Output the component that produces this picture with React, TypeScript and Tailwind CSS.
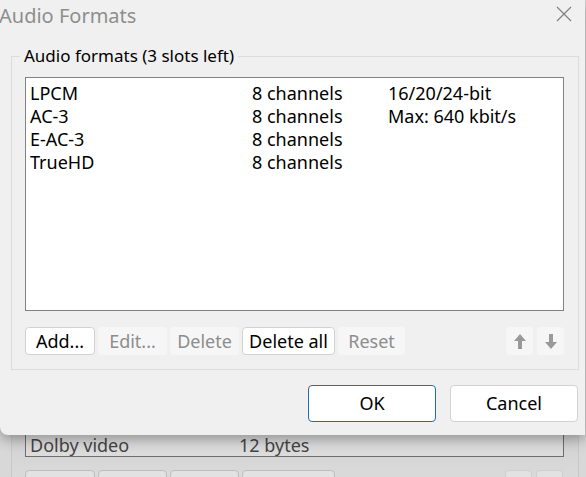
import { ReactNode } from "react";

const font = { fontFamily: '"Noto Sans", "Open Sans", sans-serif' };

interface Fmt {
  name: string;
  channels: string;
  note?: string;
}

const FORMATS: Fmt[] = [
  { name: "LPCM", channels: "8 channels", note: "16/20/24-bit" },
  { name: "AC-3", channels: "8 channels", note: "Max: 640 kbit/s" },
  { name: "E-AC-3", channels: "8 channels" },
  { name: "TrueHD", channels: "8 channels" },
];

function Btn({ children, disabled, w }: { children: ReactNode; disabled?: boolean; w: string }) {
  return (
    <button
      className={`${w} flex h-[28px] items-center justify-center rounded-[4px] text-[18px] ${
        disabled
          ? "bg-[#f6f6f6] text-[#8d8d8d]"
          : "border border-[#d2d2d2] bg-white text-black"
      }`}
    >
      {children}
    </button>
  );
}

function ArrowIcon({ down }: { down?: boolean }) {
  return (
    <svg width="12" height="15" viewBox="0 0 12 15" className={down ? "rotate-180" : ""}>
      <path d="M6 0 L12 7 L8 7 L8 15 L4 15 L4 7 L0 7 Z" fill="#9a9a9a" />
    </svg>
  );
}

export default function App() {
  return (
    <div className="flex h-[477px] w-[586px] flex-col overflow-hidden bg-[#d8d8d8]" style={font}>
      {/* dialog */}
      <div className="relative z-10 flex h-[435px] w-[585px] shrink-0 flex-col rounded-bl-[8px] bg-[#f0f0f0] shadow-[0_4px_14px_rgba(0,0,0,0.35)]">
        {/* title bar */}
        <div className="flex h-[40px] items-start justify-between">
          <span className="ml-[-1px] mt-[1px] text-[20px] leading-[30px] text-[#8e8e8e]">Audio Formats</span>
          <svg width="16" height="16" viewBox="0 0 16 16" className="mr-[13px] mt-[6px]">
            <path d="M1 1 L15 15 M15 1 L1 15" stroke="#808080" strokeWidth="1.2" />
          </svg>
        </div>

        <fieldset className="ml-[11px] mt-[4px] w-[568px] border border-[#dcdcdc] pb-[14px] pl-[13px] pr-[14px]">
          <legend className="ml-[-5px] px-[4px] text-[17px] leading-[24px] text-black">
            Audio formats (3 slots left)
          </legend>
          <div className="mt-[9px] h-[234px] w-[539px] border border-[#828282] bg-white pl-[4px] pt-[4px]">
            {FORMATS.map((f) => (
              <div key={f.name} className="flex h-[23px] items-center text-[18px] text-black">
                <span className="w-[222px]">{f.name}</span>
                <span className="w-[136px]">{f.channels}</span>
                <span>{f.note}</span>
              </div>
            ))}
          </div>
          <div className="mt-[16px] flex items-center">
            <div className="flex gap-[3px]">
              <Btn w="w-[70px]">Add...</Btn>
              <Btn w="w-[69px]" disabled>Edit...</Btn>
              <Btn w="w-[69px]" disabled>Delete</Btn>
              <Btn w="w-[93px]">Delete all</Btn>
              <Btn w="w-[67px]" disabled>Reset</Btn>
            </div>
            <div className="ml-auto flex gap-[4px]">
              <button className="flex h-[28px] w-[27px] items-center justify-center rounded-[4px] bg-[#f6f6f6]">
                <ArrowIcon />
              </button>
              <button className="flex h-[28px] w-[27px] items-center justify-center rounded-[4px] bg-[#f6f6f6]">
                <ArrowIcon down />
              </button>
            </div>
          </div>
        </fieldset>

        <div className="mr-[7px] mt-[15px] flex justify-end gap-[14px]">
          <button className="h-[37px] w-[128px] rounded-[4px] border border-[#1f6fb5] bg-white text-[18px] text-black">
            OK
          </button>
          <button className="h-[37px] w-[128px] rounded-[4px] border border-[#d2d2d2] bg-white text-[18px] text-black">
            Cancel
          </button>
        </div>
      </div>

      {/* parent window showing below the dialog */}
      <div className="ml-[11px] mr-[7px] flex flex-1 flex-col border-l border-r border-[#c8c8c8] bg-gradient-to-b from-[#d2d2d2] to-[#dedede]">
        <div className="ml-[13px] flex h-[22px] w-[539px] items-center border-b border-l border-r border-[#6e6e6e] bg-[#dcdcdc] pl-[4px] text-[18px] text-[#444]">
          <span className="w-[209px]">Dolby video</span>
          <span>12 bytes</span>
        </div>
        <div className="ml-[13px] mt-[13px] flex">
          <div className="flex gap-[3px]">
            <div className="h-[28px] w-[70px] rounded-[4px] border border-[#bdbdbd] bg-[#e2e2e2]" />
            <div className="h-[28px] w-[69px] rounded-[4px] border border-[#bdbdbd] bg-[#e2e2e2]" />
            <div className="h-[28px] w-[69px] rounded-[4px] border border-[#bdbdbd] bg-[#e2e2e2]" />
            <div className="h-[28px] w-[93px] rounded-[4px] border border-[#bdbdbd] bg-[#e2e2e2]" />
          </div>
          <div className="ml-[170px] flex gap-[4px]">
            <div className="h-[28px] w-[27px] rounded-[4px] border border-[#cfcfcf] bg-[#e2e2e2]" />
            <div className="h-[28px] w-[27px] rounded-[4px] border border-[#cfcfcf] bg-[#e2e2e2]" />
          </div>
        </div>
      </div>
    </div>
  );
}
